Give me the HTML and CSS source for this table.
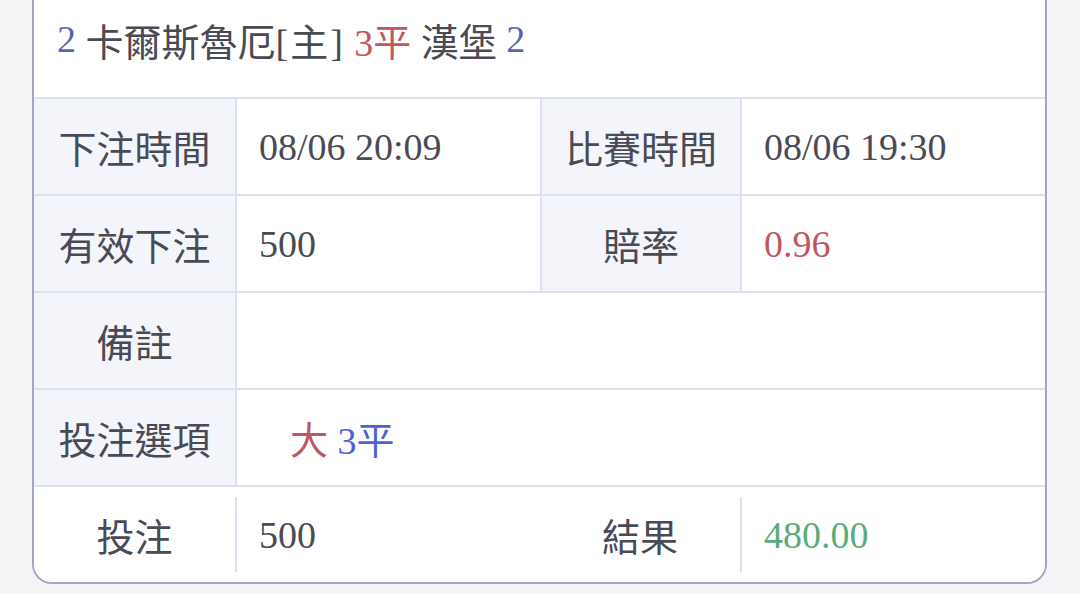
FILE: index.html
```html
<!DOCTYPE html>
<html lang="zh-Hant">
<head>
<meta charset="utf-8">
<link rel="stylesheet" href="styles.css">
</head>
<body>
<div class="card">
  <div class="grid">
    <div class="cell header"><span class="blue">2</span>&nbsp;卡爾斯魯厄<span class="bracket">[主]</span>&nbsp;<span class="red">3平</span>&nbsp;漢堡&nbsp;<span class="blue">2</span></div>

    <div class="cell label">下注時間</div>
    <div class="cell value">08/06 20:09</div>
    <div class="cell label">比賽時間</div>
    <div class="cell value">08/06 19:30</div>

    <div class="cell label">有效下注</div>
    <div class="cell value">500</div>
    <div class="cell label">賠率</div>
    <div class="cell value"><span class="red">0.96</span></div>

    <div class="cell label">備註</div>
    <div class="cell value wide"></div>

    <div class="cell label">投注選項</div>
    <div class="cell value wide"><span class="option"><span class="red">大</span>&nbsp;<span class="bright-blue">3平</span></span></div>

    <div class="footer">
      <div class="fcell flabel">投注</div>
      <div class="fcell fvalue">500</div>
      <div class="fcell flabel">結果</div>
      <div class="fcell fvalue"><span class="green">480.00</span></div>
    </div>
  </div>
</div>
</body>
</html>
```

FILE: styles.css
```css
html, body {
  margin: 0;
  padding: 0;
  background: #f4f4f6;
}

body {
  font-family: "Liberation Serif", "Noto Sans CJK TC", serif;
  font-size: 38px;
  color: #4a4a54;
  overflow: hidden;
}

.card {
  margin-left: 32px;
  width: 1011px;
  border: 2px solid #a0a5c9;
  border-top: none;
  border-radius: 0 0 20px 20px;
  background: #ffffff;
  overflow: hidden;
}

.grid {
  display: grid;
  grid-template-columns: 201px 303px 198px 303px;
  grid-template-rows: 97px 95px 95px 95px 95px 95px;
  gap: 2px;
  background: #dde0ef;
}

.cell {
  display: flex;
  align-items: center;
  background: #ffffff;
}

.header {
  grid-column: 1 / span 4;
  padding-left: 23px;
  padding-bottom: 19px;
}

.bracket {
  letter-spacing: 2px;
}

.label {
  justify-content: center;
  background: #f3f5fa;
}

.value {
  padding-left: 22px;
}

.wide {
  grid-column: 2 / span 3;
}

.option {
  margin-left: 31px;
}

.footer {
  grid-column: 1 / span 4;
  display: grid;
  grid-template-columns: 201px 305px 200px 305px;
  background: #ffffff;
  padding: 10px 0;
}

.fcell {
  display: flex;
  align-items: center;
}

.flabel {
  justify-content: center;
}

.fvalue {
  border-left: 2px solid #dde0ef;
  padding-left: 22px;
}

.blue { color: #5a64b2; }
.red { color: #c0565f; }
.bright-blue { color: #4d63d4; }
.green { color: #5aab7c; }
```
